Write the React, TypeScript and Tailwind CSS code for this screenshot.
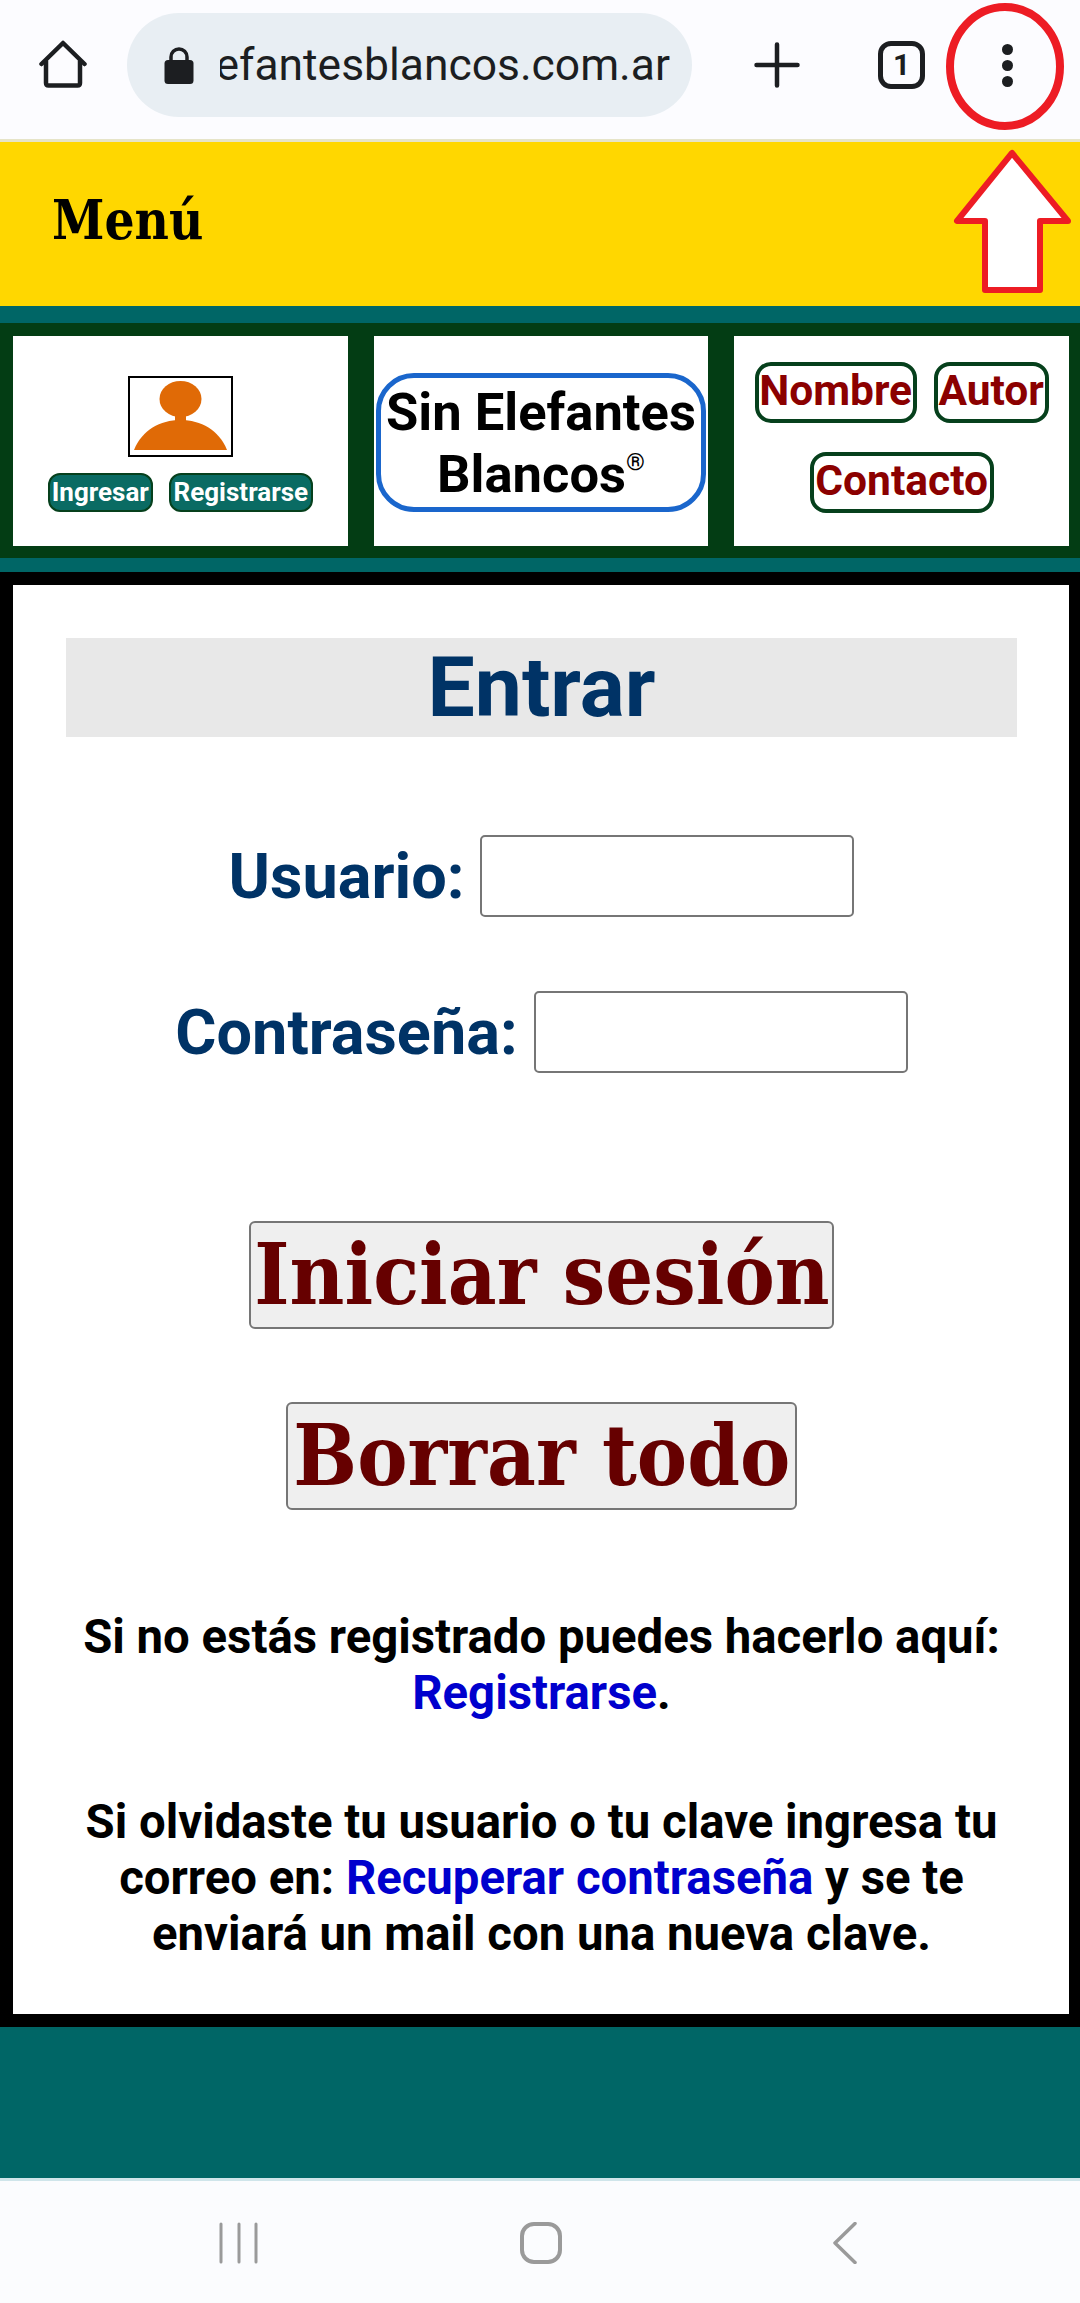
const sans = "font-['Roboto','Liberation_Sans',sans-serif]";

function HomeIcon() {
  return (
    <svg width="50" height="50" viewBox="0 0 50 50" fill="none" stroke="#1c1e21" strokeWidth="4.5" strokeLinecap="round" strokeLinejoin="round">
      <path d="M2.5 24 L24 3 L45.5 24" />
      <path d="M7 21 V43 Q7 45.5 9.5 45.5 H38.5 Q41 45.5 41 43 V21" />
    </svg>
  );
}

function LockIcon() {
  return (
    <svg width="30" height="37" viewBox="0 0 30 37" fill="none">
      <rect x="0.5" y="13" width="29" height="24" rx="3.5" fill="#1c1e21" />
      <path d="M7 14 V10 A8 8 0 0 1 23 10 V14" stroke="#1c1e21" strokeWidth="3.5" />
    </svg>
  );
}

function Avatar() {
  return (
    <div className="h-[81px] w-[105px] border-2 border-black bg-white">
      <svg width="101" height="77" viewBox="0 0 101 77">
        <ellipse cx="50.5" cy="21" rx="21" ry="18" fill="#e06a06" />
        <rect x="45" y="35" width="11" height="10" fill="#e06a06" />
        <path d="M4 72 C12 52 30 42 50.5 42 C71 42 89 52 97 72 Z" fill="#e06a06" />
      </svg>
    </div>
  );
}

function TealButton({ label, width }: { label: string; width: string }) {
  return (
    <span className={`flex h-[39px] items-center justify-center rounded-xl border-2 border-[#06401c] bg-[#0a6b63] text-[26px] font-bold text-white ${width}`}>
      {label}
    </span>
  );
}

function RedLink({ label, width }: { label: string; width: string }) {
  return (
    <span className={`flex h-[61px] items-center justify-center rounded-2xl border-4 border-[#06401c] bg-white pb-1 text-[42.5px] font-bold text-[#8b0000] ${width}`}>
      {label}
    </span>
  );
}

function FormRow({ label }: { label: string }) {
  return (
    <div className="flex items-center justify-center gap-[16px]">
      <label className="text-[63px] leading-none font-bold text-[#003366]">{label}</label>
      <input className="h-[82px] w-[374px] rounded-[5px] border-2 border-[#767676] bg-white" />
    </div>
  );
}

function FormButton({ label, width, className = '' }: { label: string; width: string; className?: string }) {
  return (
    <button
      type="button"
      className={`flex h-[108px] items-center justify-center rounded-[6px] border-2 border-[#767676] bg-[#efefef] text-[#660000] ${width} ${className}`}
    >
      <span className="inline-block scale-x-[0.888] font-['DejaVu_Serif',serif] text-[85px] font-bold whitespace-nowrap">{label}</span>
    </button>
  );
}

export default function App() {
  return (
    <div className={`relative flex h-[2303px] w-[1080px] flex-col overflow-hidden bg-[#006666] ${sans}`}>
      {/* browser toolbar */}
      <header className="flex h-[142px] shrink-0 items-center border-b-[3px] border-[#e6e4c8] bg-[#fcfcff] pb-[9px] pl-[39px]">
        <HomeIcon />
        <div className="ml-[38px] flex h-[104px] w-[565px] items-center rounded-[52px] bg-[#e8eef3] pl-[37px]">
          <LockIcon />
          <div className="ml-[26px] flex w-[450px] justify-end overflow-hidden text-[44.4px] whitespace-nowrap text-[#1c1e21]">
            elefantesblancos.com.ar
          </div>
        </div>
        <svg className="ml-[62px]" width="46" height="46" viewBox="0 0 46 46" stroke="#1c1e21" strokeWidth="4.5" strokeLinecap="round">
          <path d="M2.5 23 H43.5 M23 2.5 V43.5" />
        </svg>
        <div className="ml-[78px] flex h-[48px] w-[47px] items-center justify-center rounded-[13px] border-[5px] border-[#1c1e21] text-[30px] leading-none font-bold text-[#1c1e21]">
          1
        </div>
        <div className="ml-[77px] flex flex-col gap-[5px]">
          <span className="h-[11px] w-[11px] rounded-full bg-[#1c1e21]" />
          <span className="h-[11px] w-[11px] rounded-full bg-[#1c1e21]" />
          <span className="h-[11px] w-[11px] rounded-full bg-[#1c1e21]" />
        </div>
      </header>

      {/* menu */}
      <div className="flex h-[164px] shrink-0 items-center bg-[#ffd700] pb-[6px] pl-[52px]">
        <span className="inline-block origin-left scale-x-[0.885] font-['DejaVu_Serif',serif] text-[53.5px] font-bold text-black">Menú</span>
      </div>

      {/* site header */}
      <div className="shrink-0 pt-[17px] pb-[14px]">
        <div className="grid grid-cols-3 gap-[26px] bg-[#033d14] pt-[13px] pr-[11px] pb-[12px] pl-[13px]">
          <div className="flex h-[210px] flex-col items-center bg-white pt-[40px]">
            <Avatar />
            <div className="mt-[16px] flex gap-[16px]">
              <TealButton label="Ingresar" width="w-[105px]" />
              <TealButton label="Registrarse" width="w-[144px]" />
            </div>
          </div>
          <div className="h-[210px] bg-white px-[2px] pt-[37px]">
            <div className="flex h-[139px] flex-col items-center justify-center rounded-[38px] border-[5px] border-[#1a66cc] text-[52.5px] leading-[62px] font-bold text-black">
              <span>Sin Elefantes</span>
              <span>
                Blancos<sup className="top-[-22px] align-baseline text-[24px] leading-none font-normal">®</sup>
              </span>
            </div>
          </div>
          <div className="flex h-[210px] flex-wrap content-start justify-center gap-x-[17px] gap-y-[29px] bg-white pt-[26px]">
            <RedLink label="Nombre" width="w-[162px]" />
            <RedLink label="Autor" width="w-[115px]" />
            <RedLink label="Contacto" width="w-[184px]" />
          </div>
        </div>
      </div>

      {/* login */}
      <main className="shrink-0 bg-black pt-[13px] pr-[11px] pb-[13px] pl-[13px]">
        <div className="flex h-[1429px] flex-col items-center bg-white pt-[53px] pr-[52px] pl-[53px]">
          <h1 className="flex h-[99px] w-full items-center justify-center bg-[#e8e8e8] text-[84px] font-bold text-[#003366]">Entrar</h1>
          <div className="mt-[98px] flex flex-col gap-[74px]">
            <FormRow label="Usuario:" />
            <FormRow label="Contraseña:" />
          </div>
          <FormButton label="Iniciar sesión" width="w-[585px]" className="mt-[148px]" />
          <FormButton label="Borrar todo" width="w-[511px]" className="mt-[73px]" />
          <p className="mt-[99px] w-[950px] text-center text-[47.3px] leading-[56px] font-bold text-black">
            Si no estás registrado puedes hacerlo aquí: <a className="text-[#0000cd]">Registrarse</a>.
          </p>
          <p className="mt-[73px] w-[950px] text-center text-[47.3px] leading-[56px] font-bold text-black">
            Si olvidaste tu usuario o tu clave ingresa tu correo en: <a className="text-[#0000cd]">Recuperar contraseña</a> y se te enviará un mail con una nueva clave.
          </p>
        </div>
      </main>

      <div className="flex-1" />

      {/* android nav bar */}
      <footer className="flex h-[125px] shrink-0 items-start border-t-[3px] border-[#cfe5ea] bg-[#fbfcfe] pt-[41px] pl-[219px]">
        <svg width="40" height="42" viewBox="0 0 40 42" stroke="#9a9a9a" strokeWidth="3" strokeLinecap="round">
          <path d="M2 2 V40 M20 2 V40 M37 2 V40" />
        </svg>
        <svg className="ml-[261px]" width="42" height="42" viewBox="0 0 42 42" fill="none" stroke="#9a9a9a" strokeWidth="4">
          <rect x="2" y="2" width="38" height="38" rx="12" />
        </svg>
        <svg className="ml-[271px]" width="24" height="42" viewBox="0 0 24 42" fill="none" stroke="#9a9a9a" strokeWidth="3.5" strokeLinecap="round" strokeLinejoin="round">
          <path d="M22 1.5 L2 21 L22 40.5" />
        </svg>
      </footer>

      {/* red annotation over the page */}
      <svg className="pointer-events-none absolute top-0 left-0" width="1080" height="300" viewBox="0 0 1080 300" fill="none">
        <ellipse cx="1005" cy="66.5" rx="55" ry="59.5" stroke="#ed1c24" strokeWidth="8" />
        <path d="M1012 153 L957 221 H985 V290 H1040 V221 H1068 Z" fill="#fff" stroke="#ed1c24" strokeWidth="6" strokeLinejoin="round" />
      </svg>
    </div>
  );
}
